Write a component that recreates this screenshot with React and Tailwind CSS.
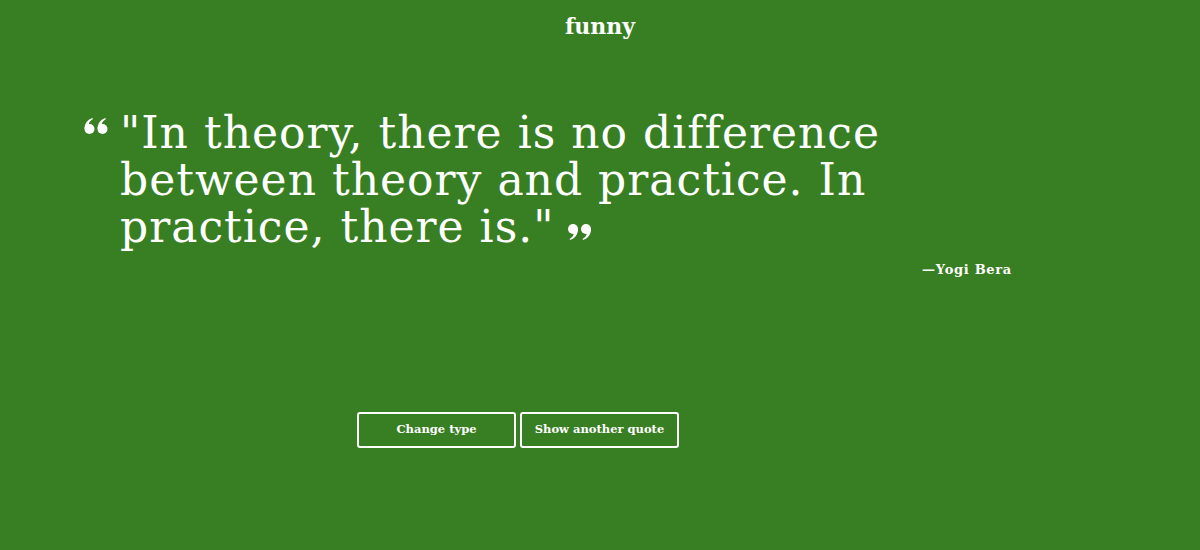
import React from 'react';

const serif = { fontFamily: '"DejaVu Serif", Georgia, serif' };

function QuoteMark({ open, className }) {
  // two bold comma shapes: "99" closing, rotated into "66" for opening
  const bulb = 'M0 5a5 5 0 1 0 10 0a5 5 0 1 0 -10 0Z';
  const tail = 'M10 5C10 10.5 7 14.5 2 16L1.6 15C4.5 13.2 5.8 11 5.6 9.5Z';
  return (
    <svg viewBox="0 0 23 16" className={className} fill="currentColor">
      <g transform={open ? 'rotate(180 11.5 8)' : undefined}>
        <path d={bulb} />
        <path d={tail} />
        <g transform="translate(13 0)">
          <path d={bulb} />
          <path d={tail} />
        </g>
      </g>
    </svg>
  );
}

export default function App() {
  return (
    <div className="min-h-[550px] w-full bg-[#387e23] text-white" style={serif}>
      {/* Header */}
      <header className="pt-[12px] text-center">
        <h1 className="text-[22px] font-bold leading-[28px]">funny</h1>
      </header>

      {/* Quote */}
      <section className="mt-[69px] ml-[84px] w-[928px]">
        <div className="flex">
          <QuoteMark open className="mt-[9px] h-[16px] w-[24px] shrink-0" />
          <p className="ml-[12px] w-[820px] text-[44px] leading-[47px] tracking-[1px]">
            "In theory, there is no difference between theory and practice. In practice, there is."
            <QuoteMark className="ml-[14px] inline-block h-[16px] w-[23px] align-[2px]" />
          </p>
        </div>
        <p className="mt-[10px] text-right text-[13px] font-bold tracking-[0.7px]">—Yogi Bera</p>
      </section>

      {/* Actions */}
      <div className="mt-[132px] flex gap-[4px] pl-[357px]">
        <button className="h-[36px] w-[159px] rounded-[3px] border-2 border-white text-[11.5px] font-bold">
          Change type
        </button>
        <button className="h-[36px] w-[159px] rounded-[3px] border-2 border-white text-[11.5px] font-bold">
          Show another quote
        </button>
      </div>
    </div>
  );
}
